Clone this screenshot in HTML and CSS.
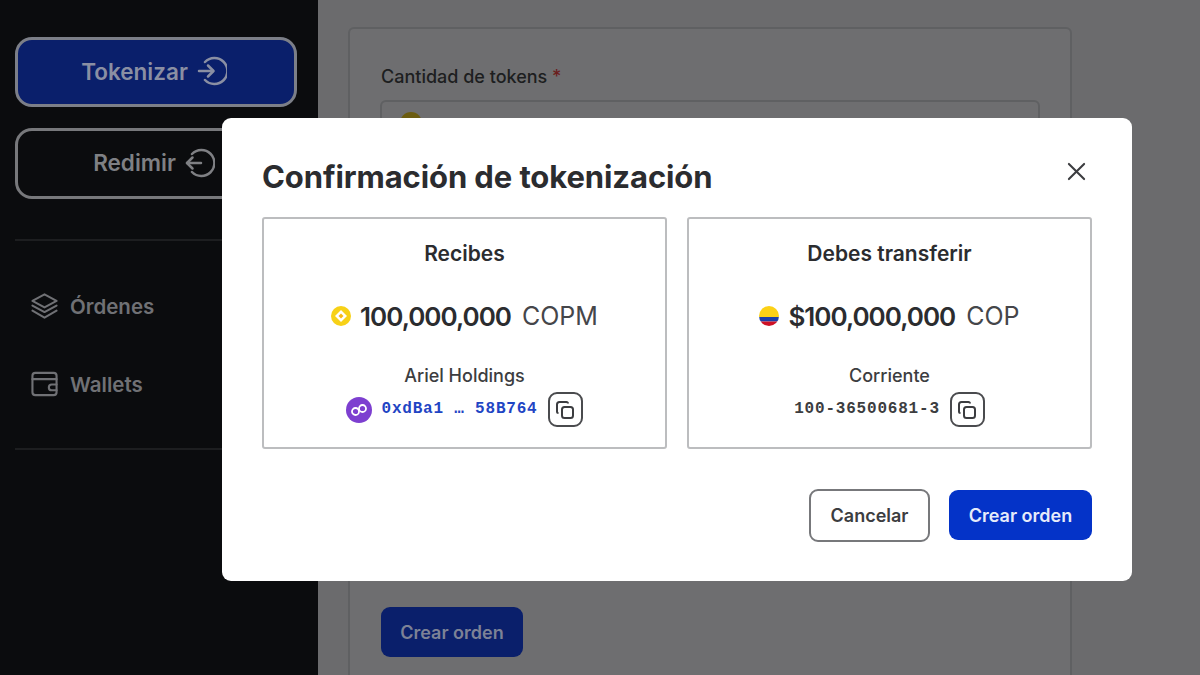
FILE: index.html
```html
<!DOCTYPE html>
<html lang="es">
<head>
    <meta charset="UTF-8">
    <meta name="viewport" content="width=device-width, initial-scale=1.0">
    <title>Tokenizar</title>
    <link rel="stylesheet" href="styles.css">
</head>
<body>
    <div class="shell">
        <aside class="sidebar">
            <div class="side-actions">
                <button class="side-btn side-btn-primary">Tokenizar
                    <svg class="side-btn-icon" viewBox="0 0 30 30" fill="none" stroke="currentColor" stroke-width="2.500" stroke-linecap="round" stroke-linejoin="round">
                        <path d="M8 6a13 13 0 1 1 0 18"/><path d="M2 15h14"/><path d="M11 9.500l5.500 5.500-5.500 5.500"/>
                    </svg>
                </button>
                <button class="side-btn">Redimir
                    <svg class="side-btn-icon" viewBox="0 0 30 30" fill="none" stroke="currentColor" stroke-width="2.500" stroke-linecap="round" stroke-linejoin="round">
                        <path d="M7 6a13 13 0 1 1 0 18"/><path d="M2 15h14"/><path d="M7.500 9.500L2 15l5.500 5.500"/>
                    </svg>
                </button>
            </div>
            <nav class="side-nav">
                <a class="side-link">
                    <svg class="side-link-icon" viewBox="0 0 28 28" fill="none" stroke="currentColor" stroke-width="2.200" stroke-linecap="round" stroke-linejoin="round">
                        <path d="M14 1.500L27 8.500l-13 7-13-7z"/><path d="M1 13.500l13 7 13-7"/><path d="M1 19l13 7.500L27 19"/>
                    </svg>
                    Órdenes
                </a>
                <a class="side-link">
                    <svg class="side-link-icon" viewBox="0 0 28 26" fill="none" stroke="currentColor" stroke-width="2.200" stroke-linecap="round" stroke-linejoin="round">
                        <rect x="1.500" y="1.500" width="25" height="23" rx="3"/><path d="M1.500 8h25"/><path d="M26.500 13.500h-5a3 3 0 0 0 0 6h5"/>
                    </svg>
                    Wallets
                </a>
            </nav>
        </aside>

        <main class="content">
            <section class="panel">
                <label class="field-label">Cantidad de tokens <span class="required">*</span></label>
                <div class="field-input"><span class="field-coin"></span></div>
                <button class="panel-submit">Crear orden</button>
            </section>
        </main>

        <div class="modal">
            <div class="modal-head">
                <h2 class="modal-title">Confirmación de tokenización</h2>
                <svg class="modal-close" viewBox="0 0 20 20" fill="none" stroke="currentColor" stroke-width="2.200" stroke-linecap="round">
                    <path d="M2 2l16 16"/><path d="M18 2L2 18"/>
                </svg>
            </div>
            <div class="cards">
                <div class="card">
                    <h3 class="card-title">Recibes</h3>
                    <div class="amount">
                        <svg class="coin" viewBox="0 0 20 20">
                            <circle cx="10" cy="10" r="10" fill="#f7d117"/>
                            <path d="M10 4l6 6-6 6-6-6z" fill="#fff"/>
                            <path d="M10 7.500l2.500 2.500-2.500 2.500-2.500-2.500z" fill="#f7b917"/>
                        </svg>
                        <strong class="amount-value">100,000,000</strong>
                        <span class="amount-unit">COPM</span>
                    </div>
                    <div class="owner">Ariel Holdings</div>
                    <div class="account">
                        <svg class="polygon" viewBox="0 0 26 26" fill="none">
                            <circle cx="13" cy="13" r="13" fill="#7d3fd0"/>
                            <circle cx="9.500" cy="14.500" r="3.500" stroke="#fff" stroke-width="1.800"/>
                            <circle cx="16.500" cy="11.500" r="3.500" stroke="#fff" stroke-width="1.800"/>
                        </svg>
                        <span class="account-code account-code-blue">0xdBa1 … 58B764</span>
                        <button class="copy-btn">
                            <svg viewBox="0 0 20 20" fill="none" stroke="currentColor" stroke-width="2" stroke-linejoin="round">
                                <rect x="7" y="7" width="11" height="11" rx="2.500"/>
                                <path d="M13 3.500c0-.8-.7-1.500-1.500-1.500h-7A2.500 2.500 0 0 0 2 4.500v7c0 .8.700 1.500 1.500 1.500"/>
                            </svg>
                        </button>
                    </div>
                </div>
                <div class="card">
                    <h3 class="card-title">Debes transferir</h3>
                    <div class="amount">
                        <svg class="coin" viewBox="0 0 20 20">
                            <clipPath id="flag"><circle cx="10" cy="10" r="10"/></clipPath>
                            <g clip-path="url(#flag)">
                                <rect width="20" height="11" fill="#fcd116"/>
                                <rect y="11" width="20" height="4.500" fill="#1c3fa8"/>
                                <rect y="15.500" width="20" height="4.500" fill="#ce1126"/>
                            </g>
                        </svg>
                        <strong class="amount-value">$100,000,000</strong>
                        <span class="amount-unit">COP</span>
                    </div>
                    <div class="owner">Corriente</div>
                    <div class="account">
                        <span class="account-code">100-36500681-3</span>
                        <button class="copy-btn">
                            <svg viewBox="0 0 20 20" fill="none" stroke="currentColor" stroke-width="2" stroke-linejoin="round">
                                <rect x="7" y="7" width="11" height="11" rx="2.500"/>
                                <path d="M13 3.500c0-.8-.7-1.500-1.500-1.500h-7A2.500 2.500 0 0 0 2 4.500v7c0 .8.700 1.500 1.500 1.500"/>
                            </svg>
                        </button>
                    </div>
                </div>
            </div>
            <div class="modal-actions">
                <button class="btn-cancel">Cancelar</button>
                <button class="btn-create">Crear orden</button>
            </div>
        </div>
    </div>
</body>
</html>
```

FILE: styles.css
```css
* {
    box-sizing: border-box;
}
body {
    margin: 0;
    font-family: Inter, "Liberation Sans", sans-serif;
    background-color: #6b6b6d;
    overflow: hidden;
}
button {
    font-family: inherit;
}
.shell {
    position: relative;
    display: flex;
    height: 675px;
    overflow: hidden;
}

/* sidebar */
.sidebar {
    width: 318px;
    flex-shrink: 0;
    background-color: #0b0c0e;
    padding: 37px 21px 0 15px;
}
.side-actions {
    display: flex;
    flex-direction: column;
    gap: 21px;
    padding-bottom: 40px;
    border-bottom: 2px solid #1d1e20;
}
.side-btn {
    display: flex;
    align-items: center;
    justify-content: center;
    gap: 9px;
    height: 71px;
    padding: 0 4px 2px 0;
    font-size: 22.500px;
    font-weight: 600;
    color: #7f8084;
    background-color: transparent;
    border: 3px solid #77787b;
    border-radius: 17px;
}
.side-btn-primary {
    height: 70px;
    color: #8a8fa3;
    background-color: #0a1f6b;
    border-color: #7c7f88;
}
.side-btn-icon {
    width: 30px;
    height: 30px;
}
.side-nav {
    display: flex;
    flex-direction: column;
    gap: 52px;
    padding: 52px 0 51px 16px;
    border-bottom: 2px solid #1d1e20;
}
.side-link {
    display: flex;
    align-items: center;
    gap: 12px;
    height: 26px;
    font-size: 20.500px;
    font-weight: 600;
    color: #707175;
}
.side-link-icon {
    width: 27px;
    height: 26px;
    flex-shrink: 0;
}

/* form behind the modal */
.content {
    flex: 1;
    padding: 27px 0 0 30px;
}
.panel {
    width: 724px;
    height: 700px;
    padding: 37px 31px 0;
    background-color: #6e6e70;
    border: 2px solid #5f6062;
    border-radius: 6px;
}
.field-label {
    display: block;
    font-size: 18px;
    font-weight: 500;
    line-height: 22px;
    color: #1d1e20;
}
.required {
    color: #6b1d1d;
}
.field-input {
    width: 660px;
    height: 60px;
    margin-top: 12px;
    margin-left: -1px;
    padding: 10px 18px;
    border: 2px solid #5f6062;
    border-radius: 6px;
}
.field-coin {
    display: block;
    width: 22px;
    height: 22px;
    border-radius: 50%;
    background-color: #6b5c10;
}
.panel-submit {
    display: block;
    width: 142px;
    height: 50px;
    margin-top: 447px;
    font-size: 18px;
    font-weight: 600;
    color: #7d8296;
    background-color: #0a1f6b;
    border: none;
    border-radius: 9px;
}

/* modal */
.modal {
    position: absolute;
    left: 222px;
    top: 118px;
    width: 910px;
    height: 463px;
    padding: 40px 40px 0;
    background-color: #fff;
    border-radius: 9px;
}
.modal-head {
    display: flex;
    justify-content: space-between;
    align-items: flex-start;
    height: 59px;
}
.modal-title {
    margin: 0;
    font-size: 31px;
    line-height: 38px;
    font-weight: 700;
    letter-spacing: -.1px;
    color: #2b2c2f;
}
.modal-close {
    width: 19px;
    height: 19px;
    margin: 4px 6px 0 0;
    color: #3c3d40;
}
.cards {
    display: flex;
    gap: 20px;
}
.card {
    flex: 1;
    height: 232px;
    padding-top: 22px;
    display: flex;
    flex-direction: column;
    align-items: center;
    border: 2px solid #bcbdbf;
    border-radius: 3px;
}
.card-title {
    margin: 0;
    font-size: 21px;
    line-height: 26px;
    font-weight: 600;
    color: #2b2c2f;
}
.amount {
    display: flex;
    align-items: center;
    height: 32px;
    margin-top: 33px;
}
.coin {
    width: 20px;
    height: 20px;
    margin-right: 9px;
}
.amount-value {
    font-size: 26px;
    font-weight: 600;
    letter-spacing: -1px;
    color: #2b2c2f;
}
.amount-unit {
    margin-left: 11px;
    font-size: 25px;
    font-weight: 400;
    color: #45464a;
}
.owner {
    margin-top: 32px;
    font-size: 18px;
    line-height: 24px;
    font-weight: 500;
    color: #3c3d40;
}
.account {
    display: flex;
    align-items: center;
    gap: 10px;
    margin-top: 4px;
}
.account-code {
    padding-bottom: 2px;
    font-family: "Liberation Mono", monospace;
    font-size: 16px;
    font-weight: 700;
    letter-spacing: .8px;
    color: #3c3d40;
}
.account-code-blue {
    color: #1f45c4;
}
.polygon {
    width: 26px;
    height: 26px;
    margin-right: -1px;
}
.copy-btn {
    display: flex;
    align-items: center;
    justify-content: center;
    width: 35px;
    height: 35px;
    padding: 0;
    color: #3c3d40;
    background-color: #fff;
    border: 2px solid #4a4b4e;
    border-radius: 9px;
}
.copy-btn svg {
    width: 20px;
    height: 20px;
}
.modal-actions {
    display: flex;
    justify-content: flex-end;
    align-items: center;
    gap: 19px;
    margin-top: 40px;
}
.btn-cancel {
    width: 121px;
    height: 53px;
    font-size: 18px;
    font-weight: 600;
    color: #3c3d40;
    background-color: #fff;
    border: 2px solid #77787b;
    border-radius: 9px;
}
.btn-create {
    width: 143px;
    height: 50px;
    margin-bottom: 1px;
    font-size: 18px;
    font-weight: 600;
    color: #e6ebfa;
    background-color: #0433c8;
    border: none;
    border-radius: 9px;
}
```
